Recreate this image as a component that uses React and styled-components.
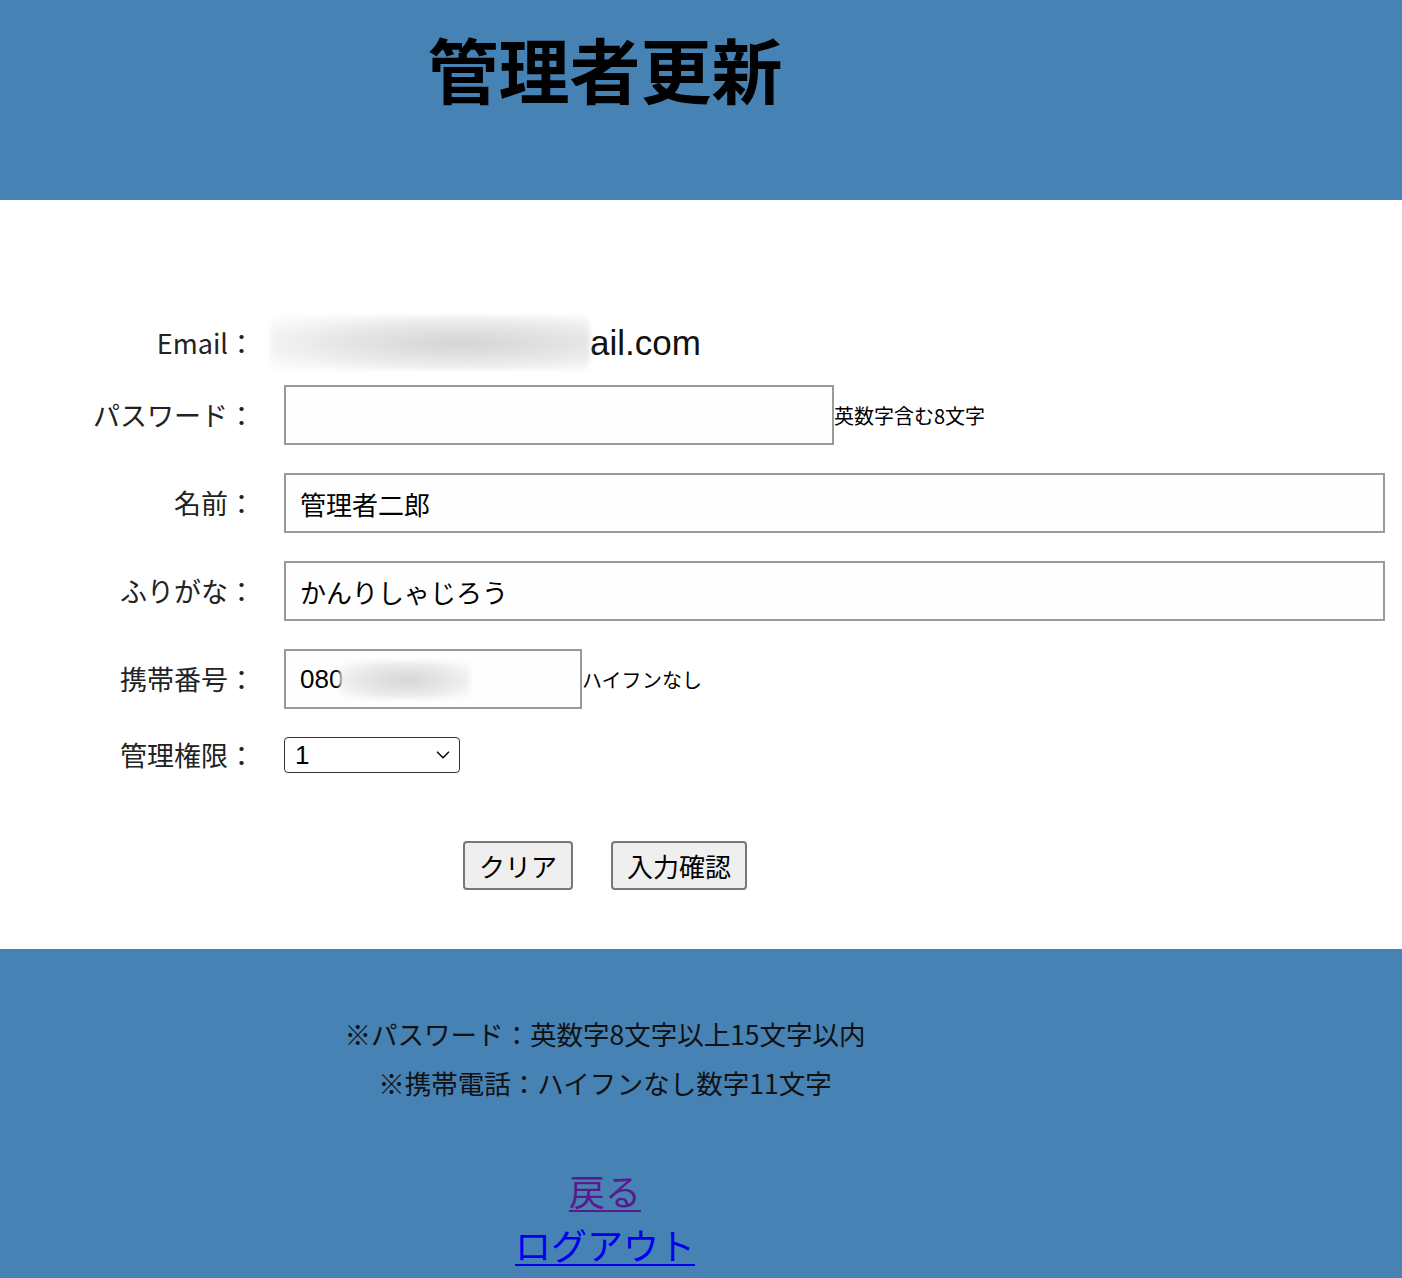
import styled, { createGlobalStyle } from 'styled-components'
import { ChevronDown } from 'lucide-react'

const GlobalStyle = createGlobalStyle`
  body {
    margin: 0;
    font-family: "Noto Sans CJK JP", "Liberation Sans", sans-serif;
    color: #111;
    background: #fff;
  }
`

const Header = styled.header`
  background: #4682b4;
  height: 200px;
`
const Inner = styled.div`
  width: 1210px;
  text-align: center;
`
const Title = styled.h1`
  margin: 0;
  padding-top: 32px;
  font-size: 71px;
  line-height: 71px;
  font-weight: 700;
  color: #000;
`

const Main = styled.main`
  padding: 129px 0 59px;
`
const Form = styled.div`
  display: grid;
  grid-template-columns: 255px 1fr;
  column-gap: 29px;
  row-gap: 28px;
  align-items: center;
  margin-right: 17px;
`
const Label = styled.div`
  text-align: right;
  font-size: 27px;
  line-height: 28px;
  color: #222;
`
const Field = styled.div`
  display: flex;
  align-items: center;
`
const EmailValue = styled.div`
  display: flex;
  align-items: center;
  height: 28px;
  font-family: "Liberation Sans", "Noto Sans CJK JP", sans-serif;
  font-size: 35px;
  color: #111;
`
const Blur = styled.span`
  display: block;
  flex: none;
  width: ${p => p.$w}px;
  height: ${p => p.$h}px;
  margin-left: ${p => p.$ml || 0}px;
  border-radius: 8px;
  background: radial-gradient(ellipse at 60% 50%, #d4d4d4 0%, #e6e6e6 45%, #f7f7f7 80%, #fbfbfb 100%);
  filter: blur(2px);
`
const Input = styled.input`
  box-sizing: border-box;
  width: ${p => p.$w};
  height: 60px;
  border: 2px solid #9a9a9a;
  background: #fefefe;
  padding: 0 14px;
  font-family: "Liberation Sans", "Noto Sans CJK JP", sans-serif;
  font-size: 26px;
  color: #000;
  outline: none;
`
const Hint = styled.span`
  font-size: 20px;
  color: #000;
  white-space: nowrap;
`
const PhoneWrap = styled.div`
  position: relative;
  display: flex;
`
const PhoneBlur = styled.span`
  position: absolute;
  left: 56px;
  top: 12px;
  width: 130px;
  height: 38px;
  border-radius: 6px;
  background: radial-gradient(ellipse at 50% 50%, #d6d6d6 0%, #e8e8e8 50%, #f8f8f8 85%, #fefefe 100%);
  filter: blur(2px);
`
const SelectWrap = styled.div`
  position: relative;
  width: 176px;
  height: 36px;
  svg {
    position: absolute;
    right: 6px;
    top: 7px;
    pointer-events: none;
  }
`
const Select = styled.select`
  appearance: none;
  box-sizing: border-box;
  width: 100%;
  height: 100%;
  border: 1px solid #333;
  border-radius: 4px;
  background: #fff;
  padding: 0 10px;
  font-family: "Liberation Sans", sans-serif;
  font-size: 26px;
  color: #000;
`
const Buttons = styled.div`
  width: 1210px;
  display: flex;
  justify-content: center;
  gap: 38px;
  margin-top: 68px;
`
const Button = styled.button`
  height: 49px;
  padding: 0 14px;
  font-family: "Noto Sans CJK JP", sans-serif;
  font-size: 26px;
  color: #000;
  background: #efefef;
  border: 2px solid #777;
  border-radius: 4px;
`

const Footer = styled.footer`
  background: #4682b4;
  padding: 60px 0 40px;
`
const Note = styled.p`
  margin: 0;
  font-size: 26.5px;
  line-height: 49px;
  color: #111;
`
const Links = styled.div`
  margin-top: 56px;
`
const NavLink = styled.a`
  display: inline-block;
  font-size: 36px;
  line-height: 54px;
  color: ${p => (p.$visited ? '#5a1a8b' : '#0000ee')};
  text-decoration: underline;
  text-decoration-thickness: 2px;
  text-underline-offset: 4px;
`
const LinkLine = styled.div``

export default function App() {
  return (
    <>
      <GlobalStyle />
      <Header>
        <Inner>
          <Title>管理者更新</Title>
        </Inner>
      </Header>
      <Main>
        <Form>
          <Label>Email：</Label>
          <EmailValue>
            <Blur $w={320} $h={54} $ml={-14} />ail.com
          </EmailValue>

          <Label>パスワード：</Label>
          <Field>
            <Input type="password" $w="550px" defaultValue="" />
            <Hint>英数字含む8文字</Hint>
          </Field>

          <Label>名前：</Label>
          <Field>
            <Input $w="100%" defaultValue="管理者二郎" />
          </Field>

          <Label>ふりがな：</Label>
          <Field>
            <Input $w="100%" defaultValue="かんりしゃじろう" />
          </Field>

          <Label>携帯番号：</Label>
          <Field>
            <PhoneWrap>
              <Input $w="298px" defaultValue="080" />
              <PhoneBlur />
            </PhoneWrap>
            <Hint>ハイフンなし</Hint>
          </Field>

          <Label>管理権限：</Label>
          <Field>
            <SelectWrap>
              <Select defaultValue="1">
                <option value="1">1</option>
                <option value="2">2</option>
              </Select>
              <ChevronDown size={22} strokeWidth={1.8} color="#111" />
            </SelectWrap>
          </Field>
        </Form>
        <Buttons>
          <Button type="button">クリア</Button>
          <Button type="button">入力確認</Button>
        </Buttons>
      </Main>
      <Footer>
        <Inner>
          <Note>※パスワード：英数字8文字以上15文字以内</Note>
          <Note>※携帯電話：ハイフンなし数字11文字</Note>
          <Links>
            <LinkLine>
              <NavLink href="#" $visited>戻る</NavLink>
            </LinkLine>
            <LinkLine>
              <NavLink href="#">ログアウト</NavLink>
            </LinkLine>
          </Links>
        </Inner>
      </Footer>
    </>
  )
}
